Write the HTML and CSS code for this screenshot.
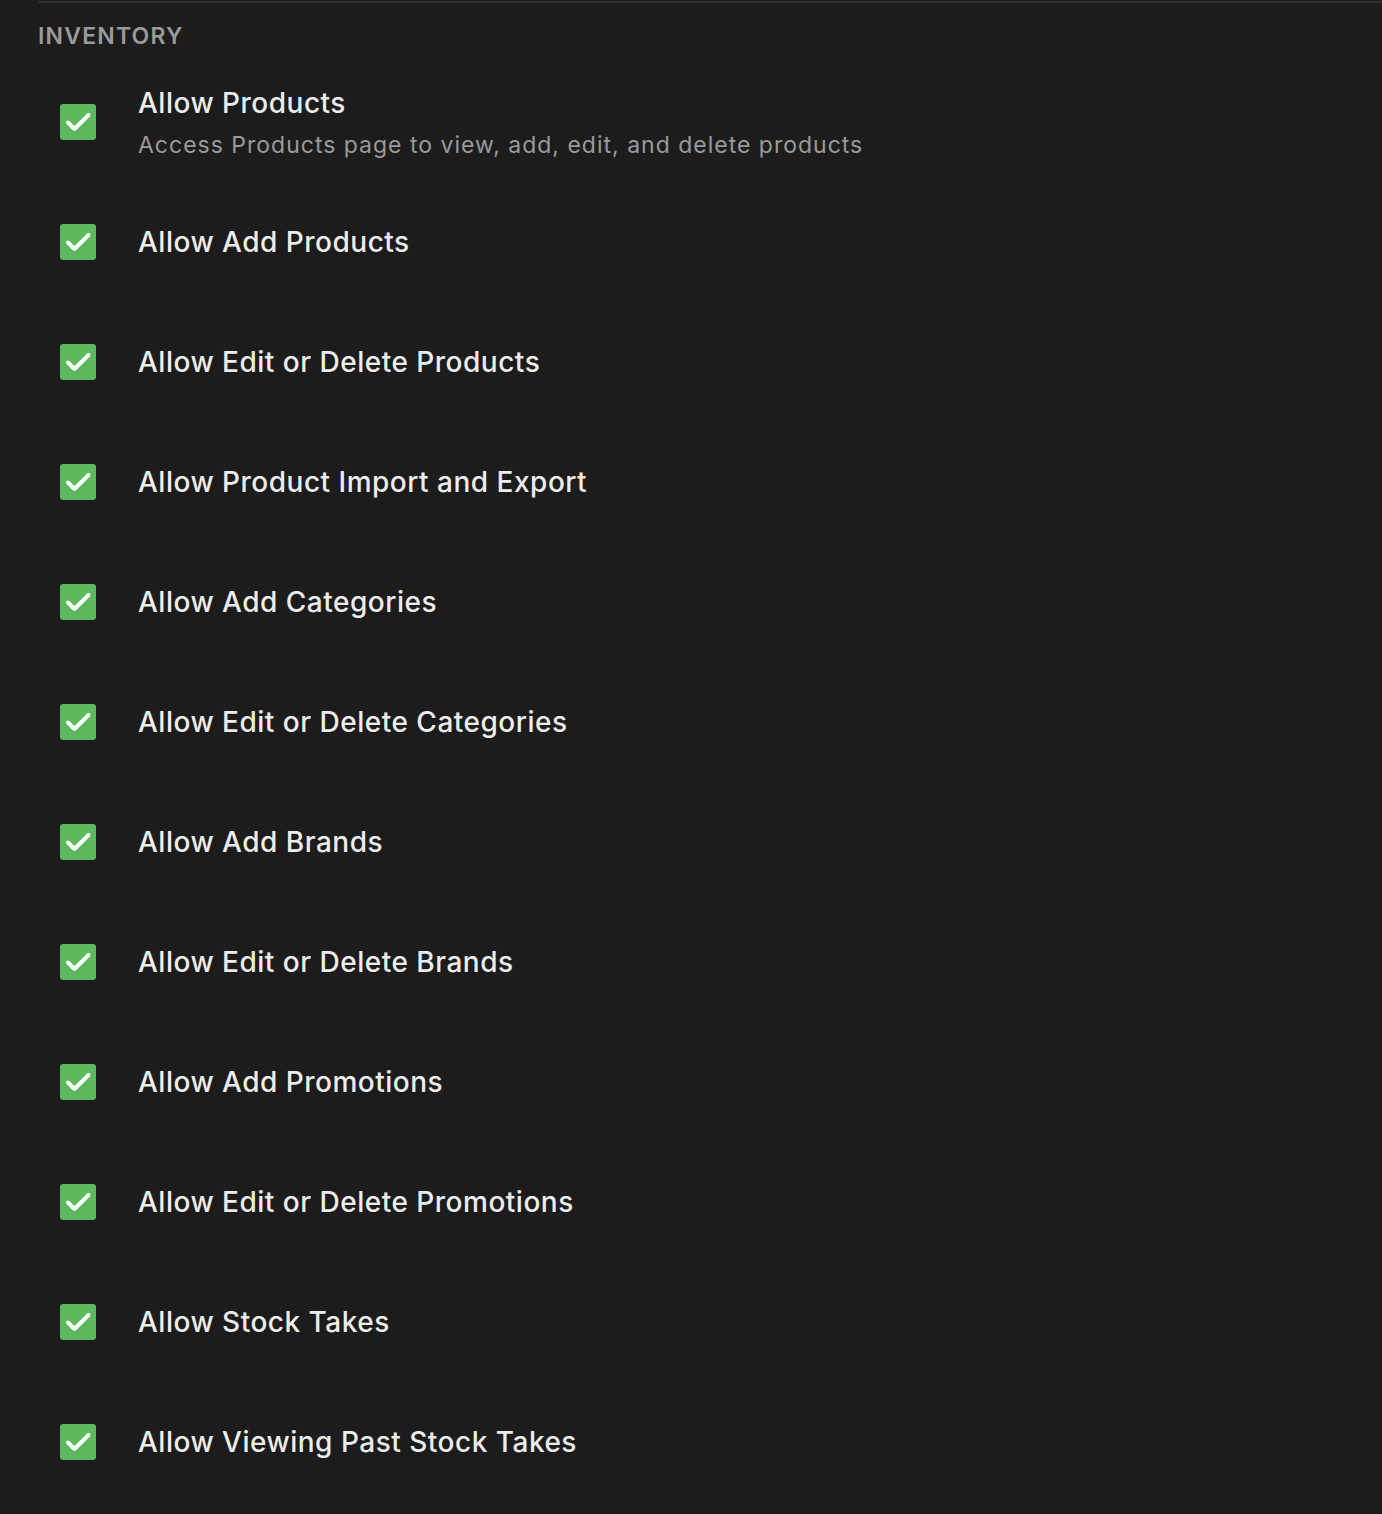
FILE: index.html
```html
<!DOCTYPE html>
<html lang="en">
<head>
    <meta charset="UTF-8">
    <meta name="viewport" content="width=device-width, initial-scale=1.0">
    <title>Permissions</title>
    <link rel="stylesheet" href="styles.css">
</head>
<body>
    <section class="group">
        <h2 class="groupTitle">INVENTORY</h2>
        <ul class="perms">
            <li class="perm">
                <span class="check"><svg viewBox="0 0 36 36"><path d="M8 18.5l6.5 6.5 14-14"/></svg></span>
                <div class="permText">
                    <p class="permName">Allow Products</p>
                    <p class="permDesc">Access Products page to view, add, edit, and delete products</p>
                </div>
            </li>
            <li class="perm">
                <span class="check"><svg viewBox="0 0 36 36"><path d="M8 18.5l6.5 6.5 14-14"/></svg></span>
                <div class="permText"><p class="permName">Allow Add Products</p></div>
            </li>
            <li class="perm">
                <span class="check"><svg viewBox="0 0 36 36"><path d="M8 18.5l6.5 6.5 14-14"/></svg></span>
                <div class="permText"><p class="permName">Allow Edit or Delete Products</p></div>
            </li>
            <li class="perm">
                <span class="check"><svg viewBox="0 0 36 36"><path d="M8 18.5l6.5 6.5 14-14"/></svg></span>
                <div class="permText"><p class="permName">Allow Product Import and Export</p></div>
            </li>
            <li class="perm">
                <span class="check"><svg viewBox="0 0 36 36"><path d="M8 18.5l6.5 6.5 14-14"/></svg></span>
                <div class="permText"><p class="permName">Allow Add Categories</p></div>
            </li>
            <li class="perm">
                <span class="check"><svg viewBox="0 0 36 36"><path d="M8 18.5l6.5 6.5 14-14"/></svg></span>
                <div class="permText"><p class="permName">Allow Edit or Delete Categories</p></div>
            </li>
            <li class="perm">
                <span class="check"><svg viewBox="0 0 36 36"><path d="M8 18.5l6.5 6.5 14-14"/></svg></span>
                <div class="permText"><p class="permName">Allow Add Brands</p></div>
            </li>
            <li class="perm">
                <span class="check"><svg viewBox="0 0 36 36"><path d="M8 18.5l6.5 6.5 14-14"/></svg></span>
                <div class="permText"><p class="permName">Allow Edit or Delete Brands</p></div>
            </li>
            <li class="perm">
                <span class="check"><svg viewBox="0 0 36 36"><path d="M8 18.5l6.5 6.5 14-14"/></svg></span>
                <div class="permText"><p class="permName">Allow Add Promotions</p></div>
            </li>
            <li class="perm">
                <span class="check"><svg viewBox="0 0 36 36"><path d="M8 18.5l6.5 6.5 14-14"/></svg></span>
                <div class="permText"><p class="permName">Allow Edit or Delete Promotions</p></div>
            </li>
            <li class="perm">
                <span class="check"><svg viewBox="0 0 36 36"><path d="M8 18.5l6.5 6.5 14-14"/></svg></span>
                <div class="permText"><p class="permName">Allow Stock Takes</p></div>
            </li>
            <li class="perm">
                <span class="check"><svg viewBox="0 0 36 36"><path d="M8 18.5l6.5 6.5 14-14"/></svg></span>
                <div class="permText"><p class="permName">Allow Viewing Past Stock Takes</p></div>
            </li>
        </ul>
    </section>
</body>
</html>
```

FILE: styles.css
```css
body{
    margin: 0;
    background-color: #1c1c1c;
    font-family: Inter, 'Noto Sans', sans-serif;
    min-height: 1514px;
}
.group{
    margin: 1px 0 0 38px;
    border-top: 2px solid #2f2f2f;
}
.groupTitle{
    margin: 0;
    padding-top: 20px;
    font-size: 23px;
    line-height: 26px;
    font-weight: 600;
    letter-spacing: 1.2px;
    color: #9a9a9a;
}
.perms{
    list-style: none;
    margin: 13px 0 0;
    padding: 0 0 0 22px;
}
.perm{
    display: flex;
    align-items: center;
    gap: 42px;
    height: 120px;
}
.check{
    flex: none;
    width: 36px;
    height: 36px;
    border-radius: 3px;
    background-color: #5cb85c;
    display: flex;
}
.check svg{
    width: 36px;
    height: 36px;
    fill: none;
    stroke: #fff;
    stroke-width: 4;
    stroke-linecap: round;
    stroke-linejoin: round;
}
.permText p{
    margin: 0;
}
.permName{
    font-size: 28px;
    line-height: 34px;
    font-weight: 500;
    letter-spacing: 0.5px;
    color: #ededed;
}
.permText .permDesc{
    margin-top: 11px;
    font-size: 23px;
    line-height: 28px;
    letter-spacing: 1px;
    color: #9a9a9a;
}
```
